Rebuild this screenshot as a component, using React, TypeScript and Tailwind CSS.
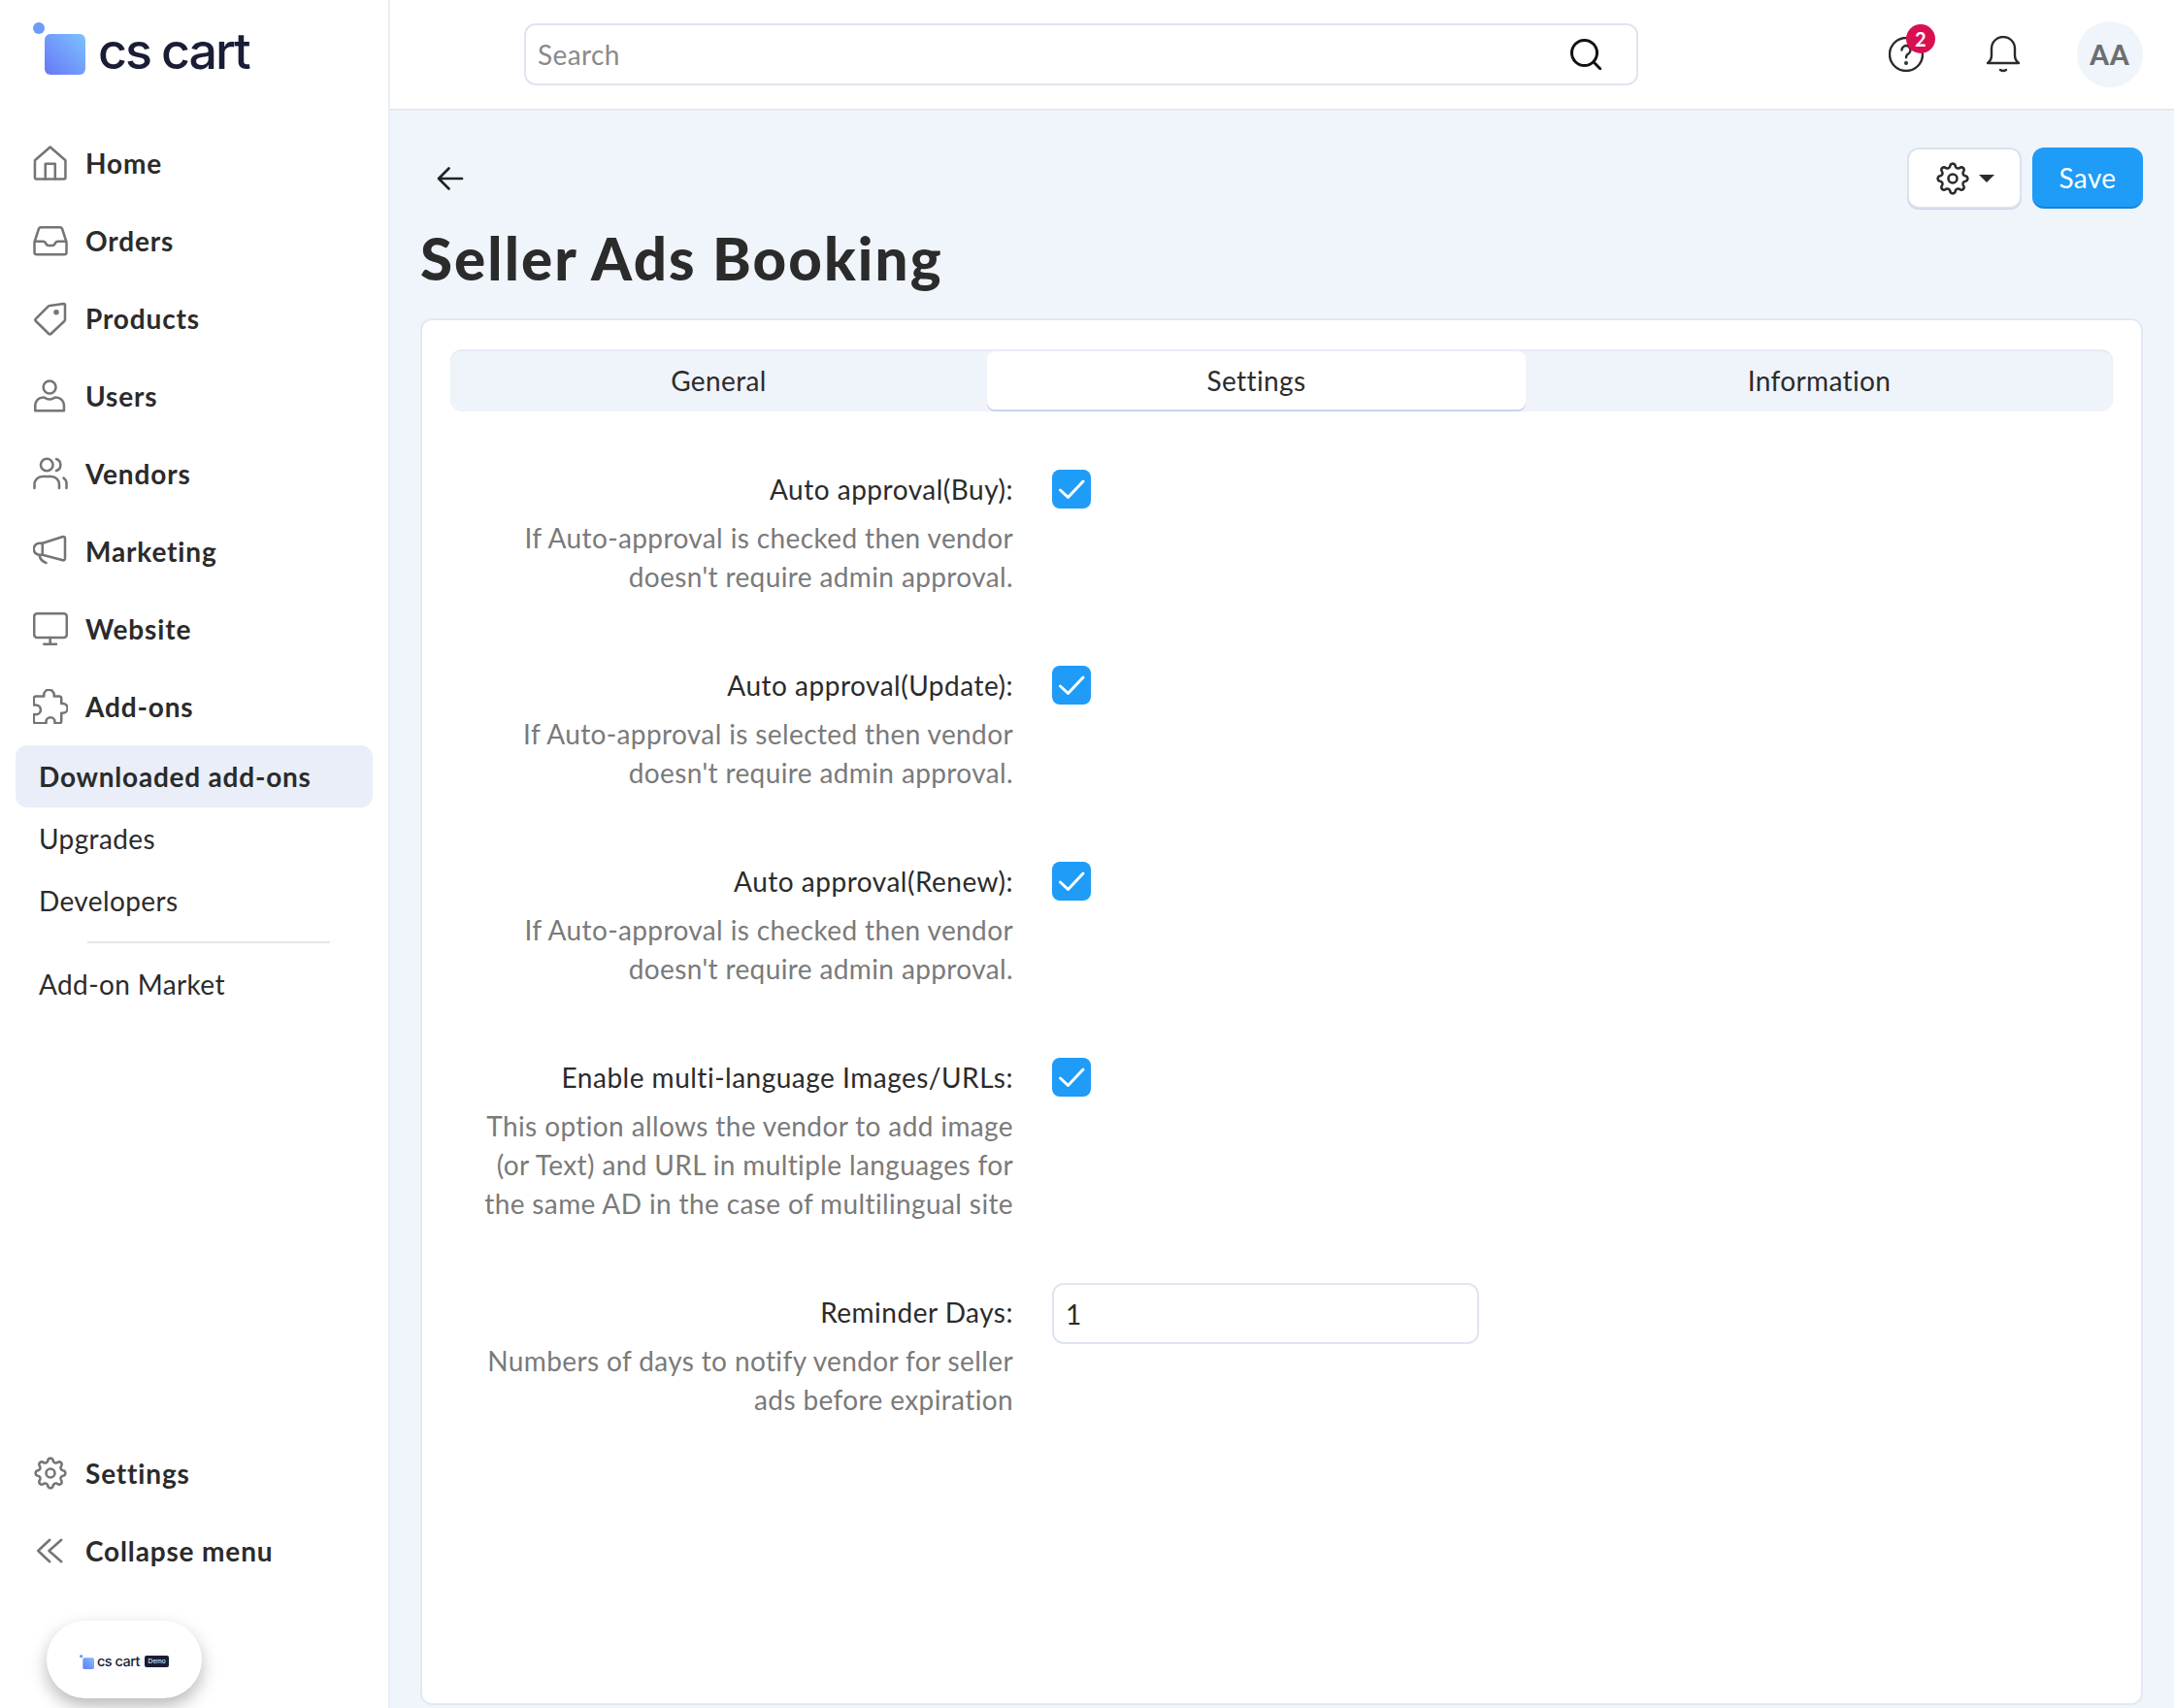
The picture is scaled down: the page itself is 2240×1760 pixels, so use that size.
import React from "react";

// ─── Icons ────────────────────────────────────────────────────────────────────

function Ico({ children, className = "w-9 h-9" }: { children: React.ReactNode; className?: string }) {
  return (
    <svg viewBox="0 0 24 24" fill="none" stroke="currentColor" strokeWidth="1.7" strokeLinecap="round" strokeLinejoin="round" className={className}>
      {children}
    </svg>
  );
}

const HomeIcon = () => (
  <Ico>
    <path d="M1.3 10.2 L11.8 1 L22.3 10.2 V22 a1 1 0 0 1 -1 1 H2.3 a1 1 0 0 1 -1 -1 Z" />
    <path d="M8.5 23 V12.5 H15.2 V23" />
  </Ico>
);
const OrdersIcon = () => (
  <Ico>
    <path d="M1 13 L4 3.8 a1.5 1.5 0 0 1 1.4 -1 H18.6 a1.5 1.5 0 0 1 1.4 1 L23 13 V20 a1.5 1.5 0 0 1 -1.5 1.5 H2.5 A1.5 1.5 0 0 1 1 20 Z" />
    <path d="M1.5 12.5 H7 q1 0 1.6 1 l0.6 1 q0.5 0.8 1.4 0.8 h2.8 q0.9 0 1.4 -0.8 l0.6 -1 q0.6 -1 1.6 -1 H22.5" />
  </Ico>
);
const TagIcon = () => (
  <Ico>
    <path d="M22 3 V13 a1.5 1.5 0 0 1 -0.5 1 L12.5 22.5 a1.3 1.3 0 0 1 -1.8 0 L2 14 a1.3 1.3 0 0 1 0 -1.8 L10.5 3.8 a1.5 1.5 0 0 1 1 -0.5 L21 2 a1 1 0 0 1 1 1 Z" />
    <circle cx="16" cy="7.8" r="1" fill="currentColor" />
  </Ico>
);
const UserIcon = () => (
  <Ico>
    <circle cx="11.4" cy="6" r="4.3" />
    <path d="M1.5 22.2 V18.5 a5.5 5.5 0 0 1 5.5 -5.5 q1 0 2 0.7 q2.4 1.2 4.8 0 q1 -0.7 2 -0.7 a5.5 5.5 0 0 1 5.5 5.5 V22.2 Z" />
  </Ico>
);
const VendorsIcon = () => (
  <Ico>
    <circle cx="9.5" cy="6" r="4.2" />
    <path d="M16 2 a4.2 4.2 0 0 1 0 8" />
    <path d="M1 22 V19.5 a5.5 5.5 0 0 1 5.5 -5.5 H12.5 a5.5 5.5 0 0 1 5.5 5.5 V22" />
    <path d="M21 15 a5 5 0 0 1 2 4.5 V22" />
  </Ico>
);
const MegaphoneIcon = () => (
  <Ico>
    <path d="M6.5 6.5 L20.5 2 a1.2 1.2 0 0 1 1.5 1.2 V17 a1.2 1.2 0 0 1 -1.5 1.2 L6.5 14.5 H4.5 a4 4 0 0 1 0 -8 Z" />
    <path d="M6.5 6.5 V14.5" />
    <path d="M4.5 15 q0.5 3.5 4.5 5" />
  </Ico>
);
const MonitorIcon = () => (
  <Ico>
    <rect x="0.8" y="1.5" width="22.4" height="16.5" rx="2" />
    <path d="M11.8 18 V22.5 M7.5 22.5 H16" />
  </Ico>
);
const PuzzleIcon = () => (
  <Ico>
    <path d="M2 5 H7.5 V4 a3.5 3.5 0 0 1 7 0 V5 H18 a1.5 1.5 0 0 1 1.5 1.5 V10 H20.5 a3.2 3.2 0 0 1 0 6.5 H19.5 V22 a1.5 1.5 0 0 1 -1.5 1.5 H15 V22.5 a3 3 0 0 0 -6 0 V23.5 H2 a1.5 1.5 0 0 1 -1.5 -1.5 V17.5 H2 a3.2 3.2 0 0 0 0 -6.5 H0.5 V6.5 A1.5 1.5 0 0 1 2 5 Z" />
  </Ico>
);
const CollapseIcon = () => (
  <Ico>
    <path d="M11.5 4.5 L3.5 12 L11.5 19.5" />
    <path d="M19.5 4.5 L11 12 L19.5 19.5" />
  </Ico>
);
const ArrowBack = () => (
  <Ico className="w-9 h-9 text-[#222]">
    <path d="M20 12 H4 M11 5 L4 12 L11 19" strokeWidth="1.8" />
  </Ico>
);

// eight rounded teeth, one pointing straight up
const GEAR_PATH = Array.from({ length: 160 }, (_, i) => {
  const t = (i / 160) * Math.PI * 2;
  const c = Math.cos(8 * t);
  const r = 9 + 1.25 * Math.sign(c) * Math.pow(Math.abs(c), 0.6);
  return `${i ? "L" : "M"}${(12 + r * Math.sin(t)).toFixed(2)} ${(12 - r * Math.cos(t)).toFixed(2)}`;
}).join(" ") + " Z";

function GearIcon({ className }: { className?: string }) {
  return (
    <Ico className={className}>
      <path d={GEAR_PATH} />
      <circle cx="12" cy="12" r="3" />
    </Ico>
  );
}

function CheckIcon() {
  return (
    <svg viewBox="0 0 40 40" fill="none" stroke="white" strokeWidth="3" strokeLinecap="round" strokeLinejoin="round" className="w-10 h-10">
      <path d="M8.5 21 L16.5 28.5 L32 12" />
    </svg>
  );
}

function LogoMark({ className }: { className: string }) {
  return (
    <svg viewBox="0 0 54 54" className={className}>
      <defs>
        <linearGradient id="lm" x1="0" y1="1" x2="1" y2="0">
          <stop offset="0" stopColor="#6677f8" />
          <stop offset="1" stopColor="#7cc2fe" />
        </linearGradient>
      </defs>
      <circle cx="6" cy="6" r="6" fill="#6d9bfb" />
      <rect x="12" y="12" width="42" height="42" rx="6" fill="url(#lm)" />
    </svg>
  );
}

// ─── Sidebar ──────────────────────────────────────────────────────────────────

const NAV = [
  { label: "Home", icon: <HomeIcon /> },
  { label: "Orders", icon: <OrdersIcon /> },
  { label: "Products", icon: <TagIcon /> },
  { label: "Users", icon: <UserIcon /> },
  { label: "Vendors", icon: <VendorsIcon /> },
  { label: "Marketing", icon: <MegaphoneIcon /> },
  { label: "Website", icon: <MonitorIcon /> },
  { label: "Add-ons", icon: <PuzzleIcon /> },
];

function NavItem({ label, icon }: { label: string; icon: React.ReactNode }) {
  return (
    <a className="flex h-20 items-center pl-[34px] gap-[18px] text-[28px] font-bold text-[#2b2b2b] tracking-[0.85px]">
      <span className="text-[#757575] flex w-9 justify-center">{icon}</span>
      {label}
    </a>
  );
}

function Sidebar() {
  return (
    <aside className="flex w-[402px] shrink-0 flex-col border-r-2 border-[#e9eef7] bg-white">
      <div className="flex h-[128px] items-start pl-[34px] pt-[23px]">
        <LogoMark className="w-[54px] h-[54px]" />
        <span className="ml-[13px] text-[52px] leading-[60px] font-medium tracking-[-2px] [word-spacing:-1px] text-[#1a1d36] font-['Inter',sans-serif]">cs cart</span>
      </div>

      <nav>
        {NAV.map(n => <NavItem key={n.label} {...n} />)}
      </nav>

      <div className="px-4 text-[28px] text-[#2b2b2b]">
        <a className="flex h-16 items-center rounded-xl bg-[#e9eef8] pl-6 font-bold tracking-[0.78px]">Downloaded add-ons</a>
        <a className="flex h-16 items-center pl-6">Upgrades</a>
        <a className="flex h-16 items-center pl-6">Developers</a>
        <div className="ml-[74px] mr-[44px] mt-[10px] mb-[10px] h-[2px] bg-[#e3e6ea]" />
        <a className="flex h-16 items-center pl-6">Add-on Market</a>
      </div>

      <div className="mt-auto">
        <NavItem label="Settings" icon={<GearIcon />} />
        <NavItem label="Collapse menu" icon={<CollapseIcon />} />
        <div className="mt-8 mb-[10px] ml-12 flex h-20 w-40 items-center justify-center rounded-[40px] bg-white pt-[4px] shadow-[0_8px_18px_rgba(0,0,0,0.28)]">
          <LogoMark className="w-[15px] h-[15px]" />
          <span className="ml-[3px] text-[14.5px] font-medium tracking-[-0.5px] text-[#1a1d36] font-['Inter',sans-serif]">cs cart</span>
          <span className="ml-[5px] h-3 w-[25px] rounded-[2px] bg-[#1a1d36] text-center text-[6.5px] leading-[12px] tracking-normal text-white font-['Inter',sans-serif]">Demo</span>
        </div>
      </div>
    </aside>
  );
}

// ─── Form ─────────────────────────────────────────────────────────────────────

function Row({ label, help, control, last }: { label: string; help: string[]; control: React.ReactNode; last?: boolean }) {
  return (
    <div className={`flex gap-10 ${last ? "" : "mb-[72px]"}`}>
      <div className="w-[580px] text-right">
        <div className="text-[28px] leading-10 tracking-[0.5px] text-[#2b2b2b]">{label}</div>
        <div className="mt-[10px] text-[28px] leading-10 text-[#7a7a7a]">
          {help.map(line => <div key={line}>{line}</div>)}
        </div>
      </div>
      {control}
    </div>
  );
}

const Check = () => (
  <span className="flex h-10 w-10 items-center justify-center rounded-lg bg-[#1e9cf7]">
    <CheckIcon />
  </span>
);

// ─── Page ─────────────────────────────────────────────────────────────────────

export default function App() {
  return (
    <div className="flex h-[1760px] w-[2240px] overflow-hidden bg-[#f0f4fb] tracking-[0.38px] font-['Lato',sans-serif]">
      <Sidebar />

      <main className="flex min-w-0 flex-1 flex-col">
        <header className="flex h-[114px] shrink-0 items-center border-b-2 border-[#e6e9ef] bg-white">
          <div className="ml-[138px] flex h-16 w-[1148px] items-center justify-between rounded-xl border-2 border-[#dfe5f0] pl-3 pr-[36px]">
            <span className="text-[28px] text-[#8a8a8a]">Search</span>
            <svg viewBox="0 0 32 32" fill="none" stroke="#111" strokeWidth="3" strokeLinecap="round" className="w-8 h-8">
              <circle cx="14.5" cy="14.5" r="13" />
              <path d="M25 25 L31 31" />
            </svg>
          </div>

          <div className="relative ml-[258px] flex h-9 w-9 items-center justify-center">
            <svg viewBox="0 0 36 36" fill="none" stroke="#2b2b2b" strokeWidth="2.4" strokeLinecap="round" className="h-9 w-9">
              <circle cx="18" cy="18" r="17" />
              <path d="M13.5 13.5 a4.5 4.5 0 1 1 7 3.8 q-2.5 1.5 -2.5 4" />
              <circle cx="18" cy="27" r="0.8" fill="#2b2b2b" />
            </svg>
            <span className="absolute -top-[13px] -right-[12px] flex h-[30px] w-[30px] items-center justify-center rounded-full bg-[#d9104f] text-[20px] font-bold text-white">2</span>
          </div>

          <svg viewBox="0 0 36 38" fill="none" stroke="#2b2b2b" strokeWidth="2.4" strokeLinecap="round" strokeLinejoin="round" className="ml-[64px] h-[38px] w-9">
            <path d="M2 28 q4 -3 4 -8 V13 a12 12 0 0 1 24 0 V20 q0 5 4 8 Z" />
            <path d="M15 35 q3 2 6 0" />
          </svg>

          <div className="ml-[58px] flex h-[68px] w-[68px] items-center justify-center rounded-full bg-[#f0f4fb] text-[28px] font-black tracking-[1px] text-[#6e6e6e]">AA</div>
        </header>

        <div className="flex min-h-0 flex-1 flex-col pl-[31px] pr-8">
          <div className="mt-[38px] flex h-[63px] shrink-0 items-center justify-between pl-[13px]">
            <ArrowBack />
            <div className="flex gap-[11px]">
              <button className="flex h-[63px] w-[118px] items-center justify-center gap-[9px] rounded-xl border-2 border-[#dbe2ef] bg-white text-[#2b2b2b] shadow-[0_1px_0_#c9d4e8]">
                <GearIcon className="h-9 w-9" />
                <span className="h-0 w-0 border-x-[8px] border-t-[8px] border-x-transparent border-t-[#2b2b2b]" />
              </button>
              <button className="h-[63px] w-[114px] rounded-xl border-b-2 border-[#1583d8] bg-[#1e9cf7] text-[28px] text-white">Save</button>
            </div>
          </div>

          <h1 className="mb-[10px] flex h-[103px] shrink-0 items-center pb-[2px] text-[60px] font-black tracking-[2.1px] text-[#2b2b2b]">Seller Ads Booking</h1>

          <section className="mb-[3px] min-h-0 flex-1 rounded-xl border-2 border-[#e3e9f3] bg-white px-[29px] pt-[30px]">
            <div className="mb-[60px] flex h-16 rounded-xl bg-[#eff3fa] text-center text-[28px] text-[#2b2b2b] shadow-[inset_0_2px_2px_#e6eaf3]">
              <div className="flex w-[553px] items-center justify-center">General</div>
              <div className="my-[2px] flex w-[555px] items-center justify-center rounded-lg bg-white shadow-[0_2px_0_#c9d4e8]">Settings</div>
              <div className="flex flex-1 items-center justify-center">Information</div>
            </div>

            <Row label="Auto approval(Buy):" help={["If Auto-approval is checked then vendor", "doesn't require admin approval."]} control={<Check />} />
            <Row label="Auto approval(Update):" help={["If Auto-approval is selected then vendor", "doesn't require admin approval."]} control={<Check />} />
            <Row label="Auto approval(Renew):" help={["If Auto-approval is checked then vendor", "doesn't require admin approval."]} control={<Check />} />
            <Row label="Enable multi-language Images/URLs:" help={["This option allows the vendor to add image", "(or Text) and URL in multiple languages for", "the same AD in the case of multilingual site"]} control={<Check />} />
            <Row
              last
              label="Reminder Days:"
              help={["Numbers of days to notify vendor for seller", "ads before expiration"]}
              control={
                <div className="-mt-[10px] flex h-[63px] w-[440px] items-center rounded-xl border-2 border-[#dfe5f0] pl-3 text-[28px] text-[#2b2b2b]">1</div>
              }
            />
          </section>
        </div>
      </main>
    </div>
  );
}
